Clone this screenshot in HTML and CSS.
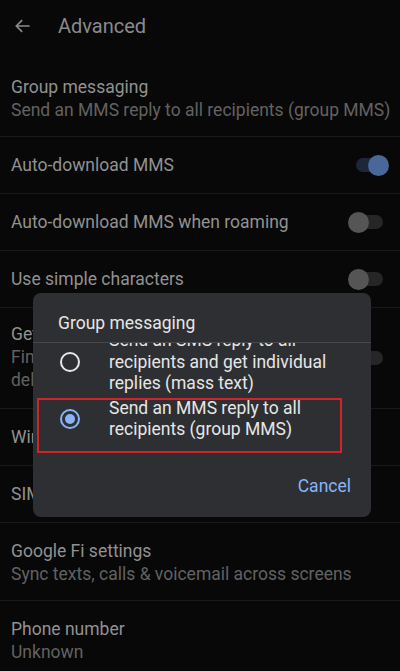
FILE: index.html
```html
<!DOCTYPE html>
<html lang="en">
<head>
    <meta charset="UTF-8">
    <title>Advanced</title>
    <link rel="stylesheet" href="styles.css">
</head>
<body>
    <div class="screen">
        <!-- Top bar -->
        <div class="topbar">
            <svg class="back" width="20" height="20" viewBox="0 0 24 24">
                <path d="M20 12H5M11 5l-7 7 7 7" fill="none" stroke="#8a8a8a" stroke-width="2"/>
            </svg>
            <span class="topbar-title">Advanced</span>
        </div>

        <!-- Settings list -->
        <div class="row two first">
            <div class="text">
                <div class="title">Group messaging</div>
                <div class="sub">Send an MMS reply to all recipients (group MMS)</div>
            </div>
        </div>
        <div class="row">
            <div class="text"><div class="title">Auto-download MMS</div></div>
            <div class="toggle on"><span class="track"></span><span class="thumb"></span></div>
        </div>
        <div class="row">
            <div class="text"><div class="title">Auto-download MMS when roaming</div></div>
            <div class="toggle"><span class="track"></span><span class="thumb"></span></div>
        </div>
        <div class="row">
            <div class="text"><div class="title">Use simple characters</div></div>
            <div class="toggle"><span class="track"></span><span class="thumb"></span></div>
        </div>
        <div class="row three">
            <div class="text">
                <div class="title">Get SMS delivery reports</div>
                <div class="sub">Find out if each SMS you send was delivered</div>
            </div>
            <div class="toggle"><span class="track"></span><span class="thumb"></span></div>
        </div>
        <div class="row">
            <div class="text"><div class="title">Wireless emergency alerts</div></div>
        </div>
        <div class="row">
            <div class="text"><div class="title">SIM card messages</div></div>
        </div>
        <div class="row two fi">
            <div class="text">
                <div class="title">Google Fi settings</div>
                <div class="sub">Sync texts, calls &amp; voicemail across screens</div>
            </div>
        </div>
        <div class="row two last">
            <div class="text">
                <div class="title">Phone number</div>
                <div class="sub">Unknown</div>
            </div>
        </div>

        <!-- Group messaging dialog -->
        <div class="dialog">
            <div class="dialog-title">Group messaging</div>
            <div class="options">
                <div class="options-inner">
                    <div class="option">
                        <span class="radio"></span>
                        <span class="option-text">Send an SMS reply to all recipients and get individual replies (mass text)</span>
                    </div>
                    <div class="option">
                        <span class="radio checked"></span>
                        <span class="option-text">Send an MMS reply to all recipients (group MMS)</span>
                    </div>
                </div>
            </div>
            <div class="actions">
                <button class="cancel">Cancel</button>
            </div>
            <div class="highlight"></div>
        </div>
    </div>
</body>
</html>
```

FILE: styles.css
```css
body {
    margin: 0;
    padding: 0;
    background-color: #080808;
    font-family: Roboto, "Noto Sans", sans-serif;
}
.screen {
    position: relative;
    width: 400px;
    height: 671px;
    overflow: hidden;
    background-color: #080808;
}
.topbar {
    display: flex;
    align-items: center;
    height: 52px;
    padding-left: 13px;
}
.back {
    margin-right: 25px;
}
.topbar-title {
    color: #8a8a8a;
    font-size: 20px;
}
.row {
    display: flex;
    align-items: center;
    min-height: 56px;
    padding-left: 11px;
    border-bottom: 1px solid #1a1a1a;
}
.row.two {
    align-items: flex-start;
    padding-top: 17px;
    padding-bottom: 17px;
    min-height: 0;
}
.row.first {
    padding-top: 24px;
    padding-bottom: 14px;
}
.row.fi {
    padding-bottom: 14px;
}
.row.three {
    min-height: 0;
    padding-top: 15px;
    padding-bottom: 16px;
}
.row.last {
    border-bottom: none;
}
.text {
    flex: 1;
    line-height: 23px;
    font-size: 17.5px;
}
.title {
    color: #919191;
}
.sub {
    color: #626262;
}
.row.three .sub {
    padding-right: 30px;
}
.toggle {
    position: relative;
    width: 41px;
    height: 20px;
    margin-right: 11px;
    flex-shrink: 0;
}
.toggle .track {
    position: absolute;
    left: 8px;
    right: 6px;
    top: 3px;
    height: 14px;
    border-radius: 7px;
    background-color: #262626;
}
.toggle .thumb {
    position: absolute;
    left: 0;
    top: 0;
    width: 21px;
    height: 21px;
    border-radius: 50%;
    background-color: #555555;
}
.toggle.on .track {
    background-color: #1d2738;
    left: 8px;
    right: 4px;
}
.toggle.on .thumb {
    left: auto;
    right: 0;
    background-color: #4a679a;
}

/* dialog */
.dialog {
    position: absolute;
    left: 33px;
    top: 293px;
    width: 338px;
    height: 224px;
    border-radius: 8px;
    background-color: #2e2f32;
    color: #e6e6e6;
}
.dialog-title {
    height: 38px;
    padding-left: 25px;
    padding-top: 11px;
    display: flex;
    align-items: center;
    font-size: 17.5px;
    border-bottom: 1px solid #48494c;
}
.options {
    height: 112px;
    overflow: hidden;
}
.options-inner {
    margin-top: -13px;
}
.option {
    display: flex;
    align-items: center;
    padding: 0 20px 0 27px;
    font-size: 17.5px;
    line-height: 21.5px;
}
.option + .option {
    margin-top: 3px;
}
.radio {
    position: relative;
    width: 16px;
    height: 16px;
    border: 2px solid #e6e6e6;
    border-radius: 50%;
    margin-right: 29px;
    flex-shrink: 0;
}
.radio.checked {
    border-color: #8ab4f8;
}
.radio.checked::after {
    content: "";
    position: absolute;
    left: 3px;
    top: 3px;
    width: 10px;
    height: 10px;
    border-radius: 50%;
    background-color: #8ab4f8;
}
.actions {
    display: flex;
    justify-content: flex-end;
    padding-top: 17px;
    padding-right: 14px;
}
.cancel {
    background: none;
    border: none;
    color: #8ab4f8;
    font-family: Roboto, "Noto Sans", sans-serif;
    font-size: 17.5px;
    padding: 4px 6px;
}
.highlight {
    position: absolute;
    left: 4px;
    top: 105px;
    width: 301px;
    height: 51px;
    border: 2px solid #d0232a;
}
```
